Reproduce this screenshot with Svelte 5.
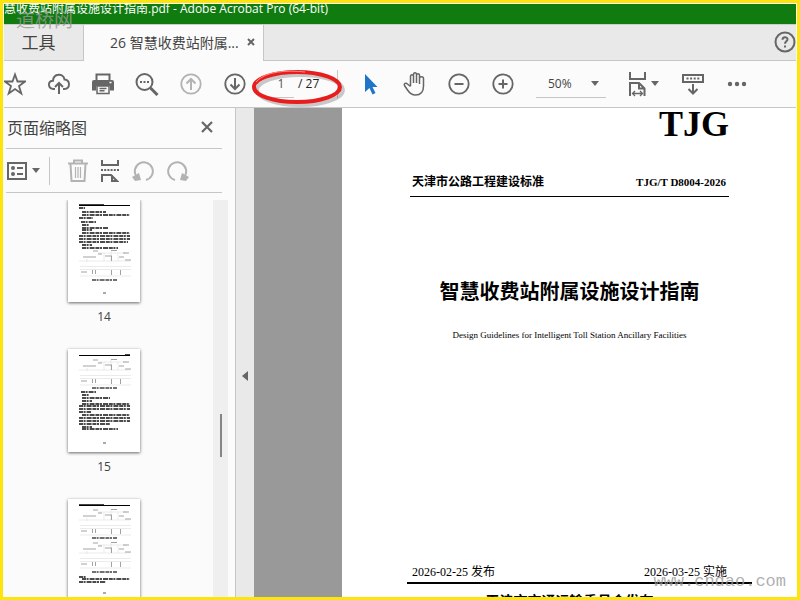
<script>
  let page = $state("1");
  let zoom = $state("50%");
  const total = 27;

  // rows: [x, y, width] of each text line; figures and captions: y
  const thumbs = [
    {
      number: 14,
      rows: [
        [11, 9, 6], [14, 13, 24], [14, 16, 48], [11, 19, 14], [13, 23, 15], [14, 26, 7],
        [14, 29, 26], [14, 31, 10], [14, 34, 48], [11, 37, 51], [11, 40, 51], [11, 43, 49],
        [14, 46, 10], [14, 49, 36]
      ],
      figures: [51],
      captions: [81]
    },
    {
      number: 15,
      rows: [
        [13, 43, 15], [14, 46, 7], [14, 49, 28], [14, 52, 10], [14, 55, 48], [11, 57, 51],
        [11, 60, 51], [11, 63, 12], [14, 66, 48], [11, 69, 51], [11, 72, 51], [11, 75, 31],
        [14, 78, 10], [14, 80, 36]
      ],
      figures: [10],
      captions: [39]
    },
    {
      number: 16,
      rows: [[11, 78, 7], [14, 80, 48], [11, 83, 27]],
      figures: [10, 43],
      captions: [39, 73]
    }
  ];
</script>

{#snippet caret()}
  <svg class="caret" width="8" height="5" viewBox="0 0 8 5"><path d="M0 0h8L4 5z" /></svg>
{/snippet}

<div class="window">
  <header class="titlebar">慧收费站附属设施设计指南.pdf - Adobe Acrobat Pro (64-bit)</header>

  <nav class="tabs">
    <button class="tab tools">工具</button>
    <div class="tab active">
      <span>26 智慧收费站附属...</span>
      <button class="close-tab" aria-label="关闭标签">
        <svg width="8" height="8" viewBox="0 0 8 8"><path d="M1 1l6 6M7 1L1 7" stroke-width="2" /></svg>
      </button>
    </div>
    <button class="help" aria-label="帮助">
      <svg width="22" height="22" viewBox="0 0 22 22">
        <circle cx="11" cy="11" r="9.5" stroke-width="2" />
        <path d="M8.5 8.8c0-3.4 5-3.2 5-.4 0 1.8-2.5 2-2.5 4.3M11 14.5v2" stroke-width="2" />
      </svg>
    </button>
  </nav>

  <div class="toolbar">
    <button aria-label="收藏">
      <svg width="22" height="24" viewBox="0 0 22 24">
        <path d="M11 2.5l2.5 7H21l-6 4.500 2.300 7.500L11 17l-6.300 4.500L7 14 1 9.500h7.500z" stroke-width="1.8" />
      </svg>
    </button>
    <button aria-label="上传">
      <svg width="22" height="24" viewBox="0 0 22 24">
        <path d="M7 17H5.500C-.5 16.500-.5 9 5 8.800 5.500 1 15.500 1 16.500 7.500c6 .5 6 9.300 0 9.500H15" stroke-width="1.9" />
        <path d="M11 22V11.500M7 15l4-4 4 4" stroke-width="2" />
      </svg>
    </button>
    <button aria-label="打印">
      <svg width="22" height="24" viewBox="0 0 22 24">
        <path class="solid" d="M2 8h18q2 0 2 2v8.500h-4V14H4v4.500H0V10q0-2 2-2z" />
        <path d="M4.500 9V2.500h13V9" stroke-width="2" />
        <path d="M5 14h12v7.500H5zM7.500 16.500h7M7.500 18.800h5" stroke-width="1.5" />
        <path d="M17.500 10.500h2" stroke="#fff" stroke-width="1.500" />
      </svg>
    </button>
    <button aria-label="查找">
      <svg width="24" height="24" viewBox="0 0 24 24">
        <circle cx="9.500" cy="10" r="8" stroke-width="2" />
        <path d="M15.500 16l7 7" stroke-width="3" />
        <path class="solid" d="M5 9h2v2H5zM8.500 9h2v2h-2zM12 9h2v2h-2z" />
      </svg>
    </button>
    <button class="dim" aria-label="上一页">
      <svg width="22" height="22" viewBox="0 0 22 22">
        <circle cx="11" cy="11" r="9.700" stroke-width="1.8" />
        <path d="M11 17V6M6.500 10.500L11 6l4.500 4.500" stroke-width="2" />
      </svg>
    </button>
    <button aria-label="下一页">
      <svg width="22" height="22" viewBox="0 0 22 22">
        <circle cx="11" cy="11" r="9.700" stroke-width="1.8" />
        <path d="M11 5v11M6.500 11.500L11 16l4.500-4.500" stroke-width="2" />
      </svg>
    </button>

    <div class="pager">
      <input type="text" aria-label="页码" bind:value={page} />
      <span>/ {total}</span>
      <svg class="mark" width="98" height="42" viewBox="0 0 98 42">
        <ellipse class="shade" cx="49" cy="21" rx="43" ry="15" />
        <ellipse class="ring" cx="46" cy="18" rx="43" ry="15" />
        <path class="shine" d="M5 13C14 2 37 1 54 3" />
      </svg>
    </div>

    <button aria-label="选择工具">
      <svg width="22" height="24" viewBox="0 0 22 24">
        <path d="M5 2v18l4.500-4 3 6.500 3-1.500-3-6h5z" fill="#2074c7" stroke="none" />
      </svg>
    </button>
    <button aria-label="抓手工具">
      <svg width="24" height="26" viewBox="0 0 24 26">
        <path d="M7.500 15V5.500c0-2.500 3-2.500 3 0V12M10.500 12V3.500c0-2.500 3-2.500 3 0V12M13.500 12V4.500c0-2.500 3-2.500 3 0V13M16.500 13V7.500c0-2.500 4-2.500 4 0V15c0 5-2 9-8 9-4 0-6-2-8-5L1.500 14.500c-1-2 1.500-3 3-1.500l3 2.500" stroke-width="1.5" />
      </svg>
    </button>
    <button aria-label="缩小">
      <svg width="22" height="22" viewBox="0 0 22 22">
        <circle cx="11" cy="11" r="9.700" stroke-width="1.8" />
        <path d="M6.500 11h9" stroke-width="2" />
      </svg>
    </button>
    <button aria-label="放大">
      <svg width="22" height="22" viewBox="0 0 22 22">
        <circle cx="11" cy="11" r="9.700" stroke-width="1.8" />
        <path d="M6.500 11h9M11 6.500v9" stroke-width="2" />
      </svg>
    </button>

    <div class="zoom">
      <select aria-label="缩放" bind:value={zoom}>
        <option>50%</option>
        <option>100%</option>
      </select>
      {@render caret()}
    </div>

    <button class="wide" aria-label="适合宽度">
      <svg width="20" height="26" viewBox="0 0 20 26">
        <path d="M3 1v7h15V1M3 25V12h9l5.500 5.500V25M12 12v5.500h5.500" stroke-width="2" />
        <path d="M6 22.500h9M8 20l-2.500 2.500L8 25M13 20l2.500 2.500L13 25" stroke-width="1.3" />
      </svg>
      {@render caret()}
    </button>
    <button aria-label="工具条">
      <svg width="22" height="24" viewBox="0 0 22 24">
        <path d="M1 3h20v7H1z" stroke-width="2" />
        <path d="M4.500 6.500h13" stroke-width="2" stroke-dasharray="2 1.600" />
        <path d="M11 12v9M6.500 17l4.500 4.500 4.500-4.500" stroke-width="2" />
      </svg>
    </button>
    <button aria-label="更多">
      <svg width="20" height="6" viewBox="0 0 20 6">
        <circle class="solid" cx="3" cy="3" r="2.200" />
        <circle class="solid" cx="10" cy="3" r="2.200" />
        <circle class="solid" cx="17" cy="3" r="2.200" />
      </svg>
    </button>
  </div>

  <main>
    <aside>
      <div class="panel-head">
        <h2>页面缩略图</h2>
        <button aria-label="关闭">
          <svg width="14" height="14" viewBox="0 0 14 14"><path d="M2 2l10 10M12 2L2 12" stroke-width="2.200" /></svg>
        </button>
      </div>
      <div class="panel-tools">
        <button class="options" aria-label="选项">
          <svg width="20" height="18" viewBox="0 0 20 18">
            <path d="M1 1h18v16H1zM10 6h6M10 12h6" stroke-width="2" />
            <circle class="solid" cx="6" cy="6" r="2" />
            <circle class="solid" cx="6" cy="12" r="2" />
          </svg>
          {@render caret()}
        </button>
        <button class="dim" aria-label="删除">
          <svg width="20" height="24" viewBox="0 0 20 24">
            <path d="M0 4.500h20M6 4V1.500h8V4M2.500 5l1 17h13l1-17" stroke-width="2" />
            <path d="M7.500 8v11M10 8v11M12.500 8v11" stroke-width="1.2" />
          </svg>
        </button>
        <button aria-label="拆分">
          <svg width="18" height="22" viewBox="0 0 18 22">
            <path d="M1 0v5h16V0M1 22v-7h9l6 6h-5v-6" stroke-width="2" />
            <path d="M0 10h18" stroke-width="2" stroke-dasharray="2 1.200" />
          </svg>
        </button>
        <button class="dim" aria-label="逆时针旋转">
          <svg width="22" height="22" viewBox="0 0 22 22">
            <path d="M4.500 16.500A9 9 0 1 1 14 20" stroke-width="2" />
            <path class="solid" d="M0 17l7-4 2 7-6 1z" />
          </svg>
        </button>
        <button class="dim" aria-label="顺时针旋转">
          <svg width="22" height="22" viewBox="0 0 22 22">
            <path d="M17.500 16.500A9 9 0 1 0 8 20" stroke-width="2" />
            <path class="solid" d="M22 17l-7-4-2 7 6 1z" />
          </svg>
        </button>
      </div>

      <div class="thumbs">
        <ol>
          {#each thumbs as thumb}
            <li>
              <svg class="sheet" width="72" height="103" viewBox="0 0 72 103">
                <path d="M11 6.500h51" stroke="#000" />
                <path d={thumb.number === 15 ? "M57 5.500h5" : "M11 5.500h25"} stroke="#444" />
                {#each thumb.rows as [x, y, w]}
                  <path class="row" d="M{x} {y}h{w}" />
                {/each}
                {#each thumb.figures as y}
                  <g transform="translate(0 {y})" class="figure">
                    <path d="M11 11h51M12 16.500h51M12 19.500h51M12 26h51M36 3v8M43 1v10M50 3v8M30 3h29M19 9v3" />
                    <path class="ink" d="M25 1h5M43 .5h6M30 4h4M55 3h6M15 7h13M37 6h7M51 7h5M57 10h6M13 22h6" />
                    <path class="ink" d="M43.500 6v5M24.500 20v4M27.500 20v4M43.500 20v5M52.500 20v5" />
                  </g>
                {/each}
                {#each thumb.captions as y}
                  <path class="row caption" d="M24 {y}h25" />
                {/each}
                <path d="M35 94h3" stroke="#555" />
              </svg>
              <span>{thumb.number}</span>
            </li>
          {/each}
        </ol>
        <div class="scrollbar"><div class="thumb"></div></div>
      </div>
    </aside>

    <button class="collapse" aria-label="折叠面板">
      <svg width="6" height="10" viewBox="0 0 6 10"><path class="solid" d="M6 0v10L0 5z" /></svg>
    </button>

    <section class="viewer">
      <article>
        <p class="code">TJG</p>
        <div class="standard">
          <span>天津市公路工程建设标准</span>
          <span class="number">TJG/T D8004-2026</span>
        </div>
        <h1>智慧收费站附属设施设计指南</h1>
        <p class="english">Design Guidelines for Intelligent Toll Station Ancillary Facilities</p>
        <div class="dates">
          <span>2026-02-25 发布</span>
          <span>2026-03-25 实施</span>
        </div>
        <p class="issuer">天津市交通运输委员会发布</p>
      </article>
    </section>
  </main>

  <span class="watermark logo">道桥网</span>
  <span class="watermark site">www.cndao.com</span>
</div>

<style>
  :global(body) {
    margin: 0;
  }
  .window {
    position: relative;
    box-sizing: border-box;
    height: 100vh;
    display: flex;
    flex-direction: column;
    overflow: hidden;
    border: 3px solid #fde50c;
    padding: 1px 1px 0;
    background: #fbfbfb;
    color: #444;
    font-family: "Open Sans", "Noto Sans CJK SC", sans-serif;
    font-size: 12px;
  }
  button {
    display: flex;
    align-items: center;
    justify-content: center;
    flex: none;
    padding: 0;
    border: 0;
    background: none;
    color: inherit;
    font: inherit;
  }
  svg {
    flex: none;
    fill: none;
    stroke: #666;
  }
  .solid,
  .caret {
    fill: #666;
    stroke: none;
  }
  .dim svg {
    stroke: #b3b3b3;
  }
  .dim .solid {
    fill: #b3b3b3;
  }

  .titlebar {
    flex: none;
    height: 20px;
    line-height: 10px;
    overflow: hidden;
    white-space: nowrap;
    background: #107c10;
    color: #fff;
  }
  .tabs {
    flex: none;
    display: flex;
    height: 35px;
    border-top: 1px solid #ccc;
    background: #e9e9e9;
  }
  .tab {
    box-sizing: border-box;
    border-right: 1px solid #c6c6c6;
    border-bottom: 1px solid #c6c6c6;
  }
  .tools {
    width: 80px;
    height: 36px;
    padding: 0 10px 2px 0;
    font-size: 17px;
  }
  .active {
    display: flex;
    align-items: center;
    gap: 8px;
    width: 180px;
    height: 36px;
    padding: 0 0 2px 26px;
    border-bottom: 0;
    background: #fbfbfb;
    font-size: 14px;
    white-space: nowrap;
  }
  .help {
    flex: 1;
    height: 36px;
    padding-bottom: 2px;
    justify-content: flex-end;
    border-bottom: 1px solid #c6c6c6;
  }

  .toolbar {
    flex: none;
    display: flex;
    align-items: center;
    gap: 22px;
    height: 47px;
    border-bottom: 1px solid #c6c6c6;
  }
  .toolbar button {
    width: 22px;
  }
  .pager {
    position: relative;
    display: flex;
    align-items: center;
    box-sizing: border-box;
    width: 70px;
    height: 28px;
    border-right: 1px solid #c6c6c6;
    color: #222;
  }
  .pager input {
    box-sizing: border-box;
    width: 26px;
    height: 28px;
    margin-right: 4px;
    padding: 0;
    border: 0;
    border-bottom: 1px solid #c6c6c6;
    background: none;
    color: #555;
    font: inherit;
    text-align: center;
  }
  .mark {
    position: absolute;
    left: -17px;
    top: -1px;
  }
  .ring {
    stroke: #e81e1e;
    stroke-width: 4;
  }
  .shade {
    stroke: #0003;
    stroke-width: 4;
  }
  .shine {
    stroke: #ff8a80;
  }
  .zoom {
    position: relative;
    display: flex;
    align-items: center;
    border-bottom: 1px solid #c6c6c6;
  }
  .zoom select {
    appearance: none;
    width: 70px;
    height: 27px;
    padding: 0 0 0 12px;
    border: 0;
    background: none;
    color: #444;
    font: inherit;
  }
  .zoom .caret {
    position: absolute;
    right: 7px;
    pointer-events: none;
  }
  .toolbar .wide {
    width: 34px;
    gap: 4px;
    margin-left: -2px;
  }

  main {
    flex: 1;
    display: flex;
    min-height: 0;
  }
  aside {
    flex: none;
    display: flex;
    flex-direction: column;
    width: 231px;
    border-right: 1px solid #c6c6c6;
  }
  .panel-head,
  .panel-tools {
    flex: none;
    display: flex;
    align-items: center;
    box-sizing: border-box;
    margin: 0 13px 0 2px;
    border-bottom: 1px solid #c6c6c6;
  }
  .panel-head {
    justify-content: space-between;
    height: 41px;
    padding: 0 8px 2px 1px;
  }
  h2 {
    margin: 0;
    font-size: 16px;
    font-weight: 400;
  }
  .panel-tools {
    gap: 13px;
    height: 44px;
  }
  .options {
    gap: 5px;
    height: 28px;
    padding: 0 9px 0 1px;
    border-right: 1px solid #c6c6c6;
    margin-right: 5px;
  }
  .thumbs {
    flex: 1;
    display: flex;
    min-height: 0;
    margin-top: 7px;
  }
  ol {
    flex: 1;
    margin: 0;
    padding: 0;
    overflow: hidden;
    list-style: none;
  }
  li {
    display: flex;
    flex-direction: column;
    align-items: center;
    height: 150px;
    padding-right: 9px;
  }
  li:first-child {
    margin-top: -1px;
  }
  .sheet {
    background: #fff;
    box-shadow: 0 1px 3px #0009;
  }
  .row {
    stroke: #111;
    stroke-width: 1.5;
    stroke-dasharray: 4 0.6 2 1 5 0.8;
  }
  .caption {
    stroke: #444;
  }
  .figure {
    stroke: #ddd;
    stroke-width: 0.6;
  }
  .ink {
    stroke: #999;
    stroke-width: 0.9;
  }
  li span {
    line-height: 30px;
  }
  .scrollbar {
    width: 15px;
    margin-right: 7px;
    background: #efefef;
  }
  .thumb {
    width: 2px;
    height: 43px;
    margin: 214px auto 0;
    background: #858585;
  }
  .collapse {
    width: 18px;
    padding-top: 46px;
    background: #e9e9e9;
  }
  .viewer {
    flex: 1;
    min-width: 0;
    padding-left: 88px;
    overflow: hidden;
    background: #999;
  }
  article {
    min-height: 100%;
    box-sizing: border-box;
    padding: 0 67px 0 68px;
    background: #fff;
    color: #000;
    font-family: "Liberation Serif", "Noto Sans CJK SC", serif;
  }
  article p {
    margin: 0;
  }
  .code {
    font-size: 36px;
    font-weight: 700;
    line-height: 32px;
    text-align: right;
  }
  .standard,
  .dates {
    display: flex;
    justify-content: space-between;
    line-height: 20px;
  }
  .standard {
    margin-top: 32px;
    padding: 0 3px 4px 2px;
    border-bottom: 1px solid #000;
    font-weight: 700;
  }
  .number {
    font-size: 11px;
  }
  h1 {
    margin: 80px 0 0;
    font-size: 20px;
    line-height: 30px;
    text-align: center;
  }
  .english {
    padding-top: 18px;
    font-size: 9px;
    line-height: 20px;
    text-align: center;
  }
  .dates {
    margin: 217px -23px 0 -3px;
    padding: 0 25px 0 5px;
    border-bottom: 2px solid #000;
  }
  .issuer {
    padding-top: 8px;
    font-size: 14px;
    font-weight: 700;
    line-height: 20px;
    text-align: center;
  }

  .watermark {
    position: absolute;
    color: #999c;
    pointer-events: none;
  }
  .logo {
    left: 13px;
    top: 4px;
    font-size: 19px;
    line-height: 26px;
  }
  .site {
    right: 11px;
    bottom: 2px;
    font-family: "Liberation Mono", monospace;
    font-size: 17px;
    line-height: 26px;
  }
</style>
